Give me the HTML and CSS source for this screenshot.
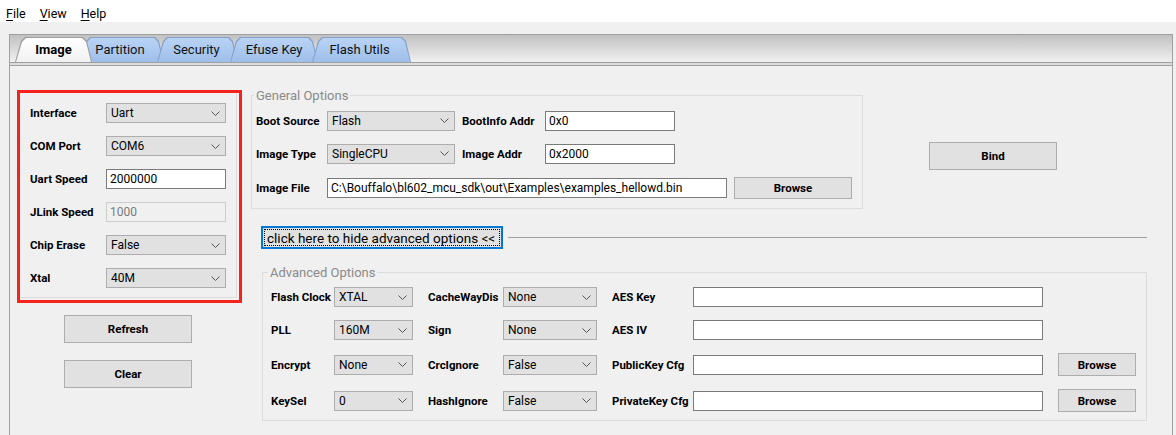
FILE: index.html
```html
<!DOCTYPE html>
<html>
<head>
<meta charset="utf-8">
<link rel="stylesheet" href="styles.css">
</head>
<body>
<div class="menubar">
  <span class="menu-item"><u>F</u>ile</span>
  <span class="menu-item"><u>V</u>iew</span>
  <span class="menu-item"><u>H</u>elp</span>
</div>

<div class="tabwidget">
  <div class="tabbar">
    <div class="tab tab-image selected">Image</div>
    <div class="tab tab-partition">Partition</div>
    <div class="tab tab-security">Security</div>
    <div class="tab tab-efuse">Efuse Key</div>
    <div class="tab tab-flash">Flash Utils</div>
  </div>
  <div class="tabline"></div>
  <div class="pane">
    <div class="left">
      <div class="redbox">
        <div class="conn">
          <span class="lbl">Interface</span>
          <div class="combo"><span>Uart</span><svg class="chev" width="9" height="5" viewBox="0 0 9 5"><polyline points="0.5,0.5 4.5,4.5 8.5,0.5"/></svg></div>
          <span class="lbl">COM Port</span>
          <div class="combo"><span>COM6</span><svg class="chev" width="9" height="5" viewBox="0 0 9 5"><polyline points="0.5,0.5 4.5,4.5 8.5,0.5"/></svg></div>
          <span class="lbl">Uart Speed</span>
          <div class="input">2000000</div>
          <span class="lbl">JLink Speed</span>
          <div class="input disabled">1000</div>
          <span class="lbl">Chip Erase</span>
          <div class="combo"><span>False</span><svg class="chev" width="9" height="5" viewBox="0 0 9 5"><polyline points="0.5,0.5 4.5,4.5 8.5,0.5"/></svg></div>
          <span class="lbl">Xtal</span>
          <div class="combo"><span>40M</span><svg class="chev" width="9" height="5" viewBox="0 0 9 5"><polyline points="0.5,0.5 4.5,4.5 8.5,0.5"/></svg></div>
        </div>
      </div>
      <div class="btn btn-side refresh">Refresh</div>
      <div class="btn btn-side clear">Clear</div>
    </div>

    <div class="right">
      <div class="top-row">
        <div class="group general">
          <span class="legend">General Options</span>
          <div class="gen-rows">
            <div class="grow">
              <span class="lbl glbl">Boot Source</span>
              <div class="combo w128"><span>Flash</span><svg class="chev" width="9" height="5" viewBox="0 0 9 5"><polyline points="0.5,0.5 4.5,4.5 8.5,0.5"/></svg></div>
              <span class="lbl glbl2">BootInfo Addr</span>
              <div class="input w130">0x0</div>
            </div>
            <div class="grow">
              <span class="lbl glbl">Image Type</span>
              <div class="combo w128"><span>SingleCPU</span><svg class="chev" width="9" height="5" viewBox="0 0 9 5"><polyline points="0.5,0.5 4.5,4.5 8.5,0.5"/></svg></div>
              <span class="lbl glbl2">Image Addr</span>
              <div class="input w130">0x2000</div>
            </div>
            <div class="grow grow-last">
              <span class="lbl glbl">Image File</span>
              <div class="input w400">C:\Bouffalo\bl602_mcu_sdk\out\Examples\examples_hellowd.bin</div>
              <div class="btn browse-lg">Browse</div>
            </div>
          </div>
        </div>
        <div class="btn bind">Bind</div>
      </div>

      <div class="toggle-row">
        <div class="toggle"><div class="toggle-inner">click here to hide advanced options &lt;&lt;</div></div>
        <div class="toggle-line"></div>
      </div>

      <div class="group advanced">
        <span class="legend">Advanced Options</span>
        <div class="adv-grid">
          <span class="lbl">Flash Clock</span>
          <div class="combo"><span>XTAL</span><svg class="chev" width="9" height="5" viewBox="0 0 9 5"><polyline points="0.5,0.5 4.5,4.5 8.5,0.5"/></svg></div>
          <span class="lbl pl">CacheWayDis</span>
          <div class="combo"><span>None</span><svg class="chev" width="9" height="5" viewBox="0 0 9 5"><polyline points="0.5,0.5 4.5,4.5 8.5,0.5"/></svg></div>
          <span class="lbl pl">AES Key</span>
          <div class="input"></div>
          <span></span>

          <span class="lbl">PLL</span>
          <div class="combo"><span>160M</span><svg class="chev" width="9" height="5" viewBox="0 0 9 5"><polyline points="0.5,0.5 4.5,4.5 8.5,0.5"/></svg></div>
          <span class="lbl pl">Sign</span>
          <div class="combo"><span>None</span><svg class="chev" width="9" height="5" viewBox="0 0 9 5"><polyline points="0.5,0.5 4.5,4.5 8.5,0.5"/></svg></div>
          <span class="lbl pl">AES IV</span>
          <div class="input"></div>
          <span></span>

          <span class="lbl">Encrypt</span>
          <div class="combo"><span>None</span><svg class="chev" width="9" height="5" viewBox="0 0 9 5"><polyline points="0.5,0.5 4.5,4.5 8.5,0.5"/></svg></div>
          <span class="lbl pl">CrcIgnore</span>
          <div class="combo"><span>False</span><svg class="chev" width="9" height="5" viewBox="0 0 9 5"><polyline points="0.5,0.5 4.5,4.5 8.5,0.5"/></svg></div>
          <span class="lbl pl">PublicKey Cfg</span>
          <div class="input"></div>
          <div class="btn browse-sm">Browse</div>

          <span class="lbl">KeySel</span>
          <div class="combo"><span>0</span><svg class="chev" width="9" height="5" viewBox="0 0 9 5"><polyline points="0.5,0.5 4.5,4.5 8.5,0.5"/></svg></div>
          <span class="lbl pl">HashIgnore</span>
          <div class="combo"><span>False</span><svg class="chev" width="9" height="5" viewBox="0 0 9 5"><polyline points="0.5,0.5 4.5,4.5 8.5,0.5"/></svg></div>
          <span class="lbl pl">PrivateKey Cfg</span>
          <div class="input"></div>
          <div class="btn browse-sm">Browse</div>
        </div>
      </div>
    </div>
  </div>
</div>
</body>
</html>
```

FILE: styles.css
```css
* { box-sizing: border-box; }
html, body { margin: 0; padding: 0; }
body {
  width: 1176px;
  height: 435px;
  overflow: hidden;
  background: #f0f0f0;
  font-family: Roboto, "Noto Sans", sans-serif;
  font-size: 12px;
  color: #000;
}

/* menu */
.menubar {
  height: 22px;
  background: #fff;
  display: flex;
  padding: 5px 0 0 6px;
  font-size: 12.5px;
  line-height: 17px;
}
.menu-item { margin-right: 14px; }
.menu-item u { text-underline-offset: 2px; }

/* tab widget */
.tabwidget { margin: 12px 0 0 9px; width: 1164px; }
.tabbar {
  height: 28px;
  border: 1px solid #a0a0a0;
  border-bottom: 0;
  background: linear-gradient(#c1c1c1, #f0f0f0);
  display: flex;
  align-items: flex-end;
  padding-left: 5px;
}
.tab {
  position: relative;
  height: 25px;
  display: flex;
  align-items: center;
  justify-content: center;
  font-size: 13px;
  color: #111;
}
.tab::before,
.tab::after {
  content: "";
  position: absolute;
  z-index: -1;
  clip-path: polygon(0 100%, 6px 4px, 10px 0, calc(100% - 9px) 0, calc(100% - 5px) 4px, 100% 100%);
}
.tab::before { inset: 0; background: #86a2c9; }
.tab::after { inset: 1px 1px 0 1px; background: linear-gradient(#b9d3f5, #9ebfea); }
.tab.selected { font-weight: 700; color: #000; }
.tab.selected::before { background: #9c9c9c; }
.tab.selected::after { background: linear-gradient(#ffffff, #f1f1f1); }

.tab-image { width: 77px; z-index: 10; }
.tab-partition { width: 84px; margin-left: -12px; z-index: 1; padding-right: 4px; }
.tab-security { width: 81px; margin-left: -7px; z-index: 2; padding-right: 2px; }
.tab-efuse { width: 88px; margin-left: -8px; z-index: 3; }
.tab-flash { width: 99px; margin-left: -6px; z-index: 4; padding-right: 4px; }

.tabline {
  height: 4px;
  border: 1px solid #a0a0a0;
  background: #dcdcdc;
}
.pane {
  height: 369px;
  border-left: 1px solid #a0a0a0;
  border-right: 1px solid #a0a0a0;
  display: flex;
  align-items: flex-start;
  padding-left: 7px;
}

/* common controls */
.lbl {
  font-weight: 700;
  font-size: 11.5px;
  white-space: nowrap;
}
.combo {
  height: 20px;
  background: #e1e1e1;
  border: 1px solid #adadad;
  display: flex;
  align-items: center;
  justify-content: space-between;
  padding: 0 5px 0 4px;
  white-space: nowrap;
}
.chev { fill: none; stroke: #555; stroke-width: 1; flex: none; }
.input {
  height: 20px;
  background: #fff;
  border: 1px solid #7a7a7a;
  display: flex;
  align-items: center;
  padding-left: 3px;
  white-space: nowrap;
  overflow: hidden;
}
.input.disabled {
  background: #f0f0f0;
  border-color: #cccccc;
  color: #7a7a7a;
}
.btn {
  background: #e1e1e1;
  border: 1px solid #adadad;
  display: flex;
  align-items: center;
  justify-content: center;
  font-weight: 700;
  font-size: 11.5px;
}

/* left column */
.left { width: 225px; margin-top: 24px; display: flex; flex-direction: column; }
.redbox { border: 3px solid #f5231b; padding: 0 2px 2px 0; }
.conn {
  border-right: 1px solid #dcdcdc;
  border-bottom: 1px solid #dcdcdc;
  padding: 10px 0 9px 10px;
  display: grid;
  grid-template-columns: 76px 120px;
  grid-auto-rows: 20px;
  row-gap: 13px;
  align-items: center;
}
.btn-side { width: 128px; height: 28px; margin-left: 47px; }
.refresh { margin-top: 12px; }
.clear { margin-top: 17px; }

/* right column */
.right { width: 896px; margin-left: 9px; }
.top-row { display: flex; align-items: flex-start; }
.group { border: 1px solid #dcdcdc; }
.legend {
  display: block;
  width: max-content;
  height: 16px;
  margin: -8px 0 0 2px;
  padding: 0 2px;
  line-height: 16px;
  font-size: 13px;
  color: #8a8a8a;
  background: #f0f0f0;
}
.general { width: 612px; margin-top: 29px; }
.gen-rows { padding: 6px 0 9px 4px; }
.grow { display: flex; align-items: center; height: 21px; }
.grow + .grow { margin-top: 12px; }
.grow.grow-last { margin-top: 13px; height: 22px; }
.glbl { width: 71px; }
.glbl2 { width: 90px; padding-left: 7px; }
.w128 { width: 128px; }
.w130 { width: 130px; }
.w400 { width: 400px; }
.browse-lg { width: 118px; height: 22px; margin-left: 7px; }
.bind { width: 128px; height: 28px; margin: 76px 0 0 66px; }

.toggle-row { display: flex; align-items: center; margin-top: 17px; padding-left: 10px; }
.toggle {
  width: 242px;
  height: 23px;
  border: 2px solid #0078d7;
  padding: 1px;
  background: #e1e1e1;
}
.toggle-inner {
  height: 100%;
  border: 1px dotted #000;
  display: flex;
  align-items: center;
  padding-left: 2px;
  font-size: 13.5px;
  white-space: nowrap;
}
.toggle-line { flex: 1; height: 1px; background: #a0a0a0; margin-left: 5px; }

.advanced { width: 885px; margin: 23px 0 0 11px; }
.advanced .legend { margin-left: 5px; }
.adv-grid {
  display: grid;
  grid-template-columns: 63px 79px 90px 94px 96px 350px 93px;
  grid-template-rows: 20px 20px 23px 23px;
  row-gap: 13px;
  align-items: center;
  padding: 6px 0 8px 8px;
}
.pl { padding-left: 15px; }
.browse-sm { width: 78px; height: 23px; margin-left: 15px; }
```
